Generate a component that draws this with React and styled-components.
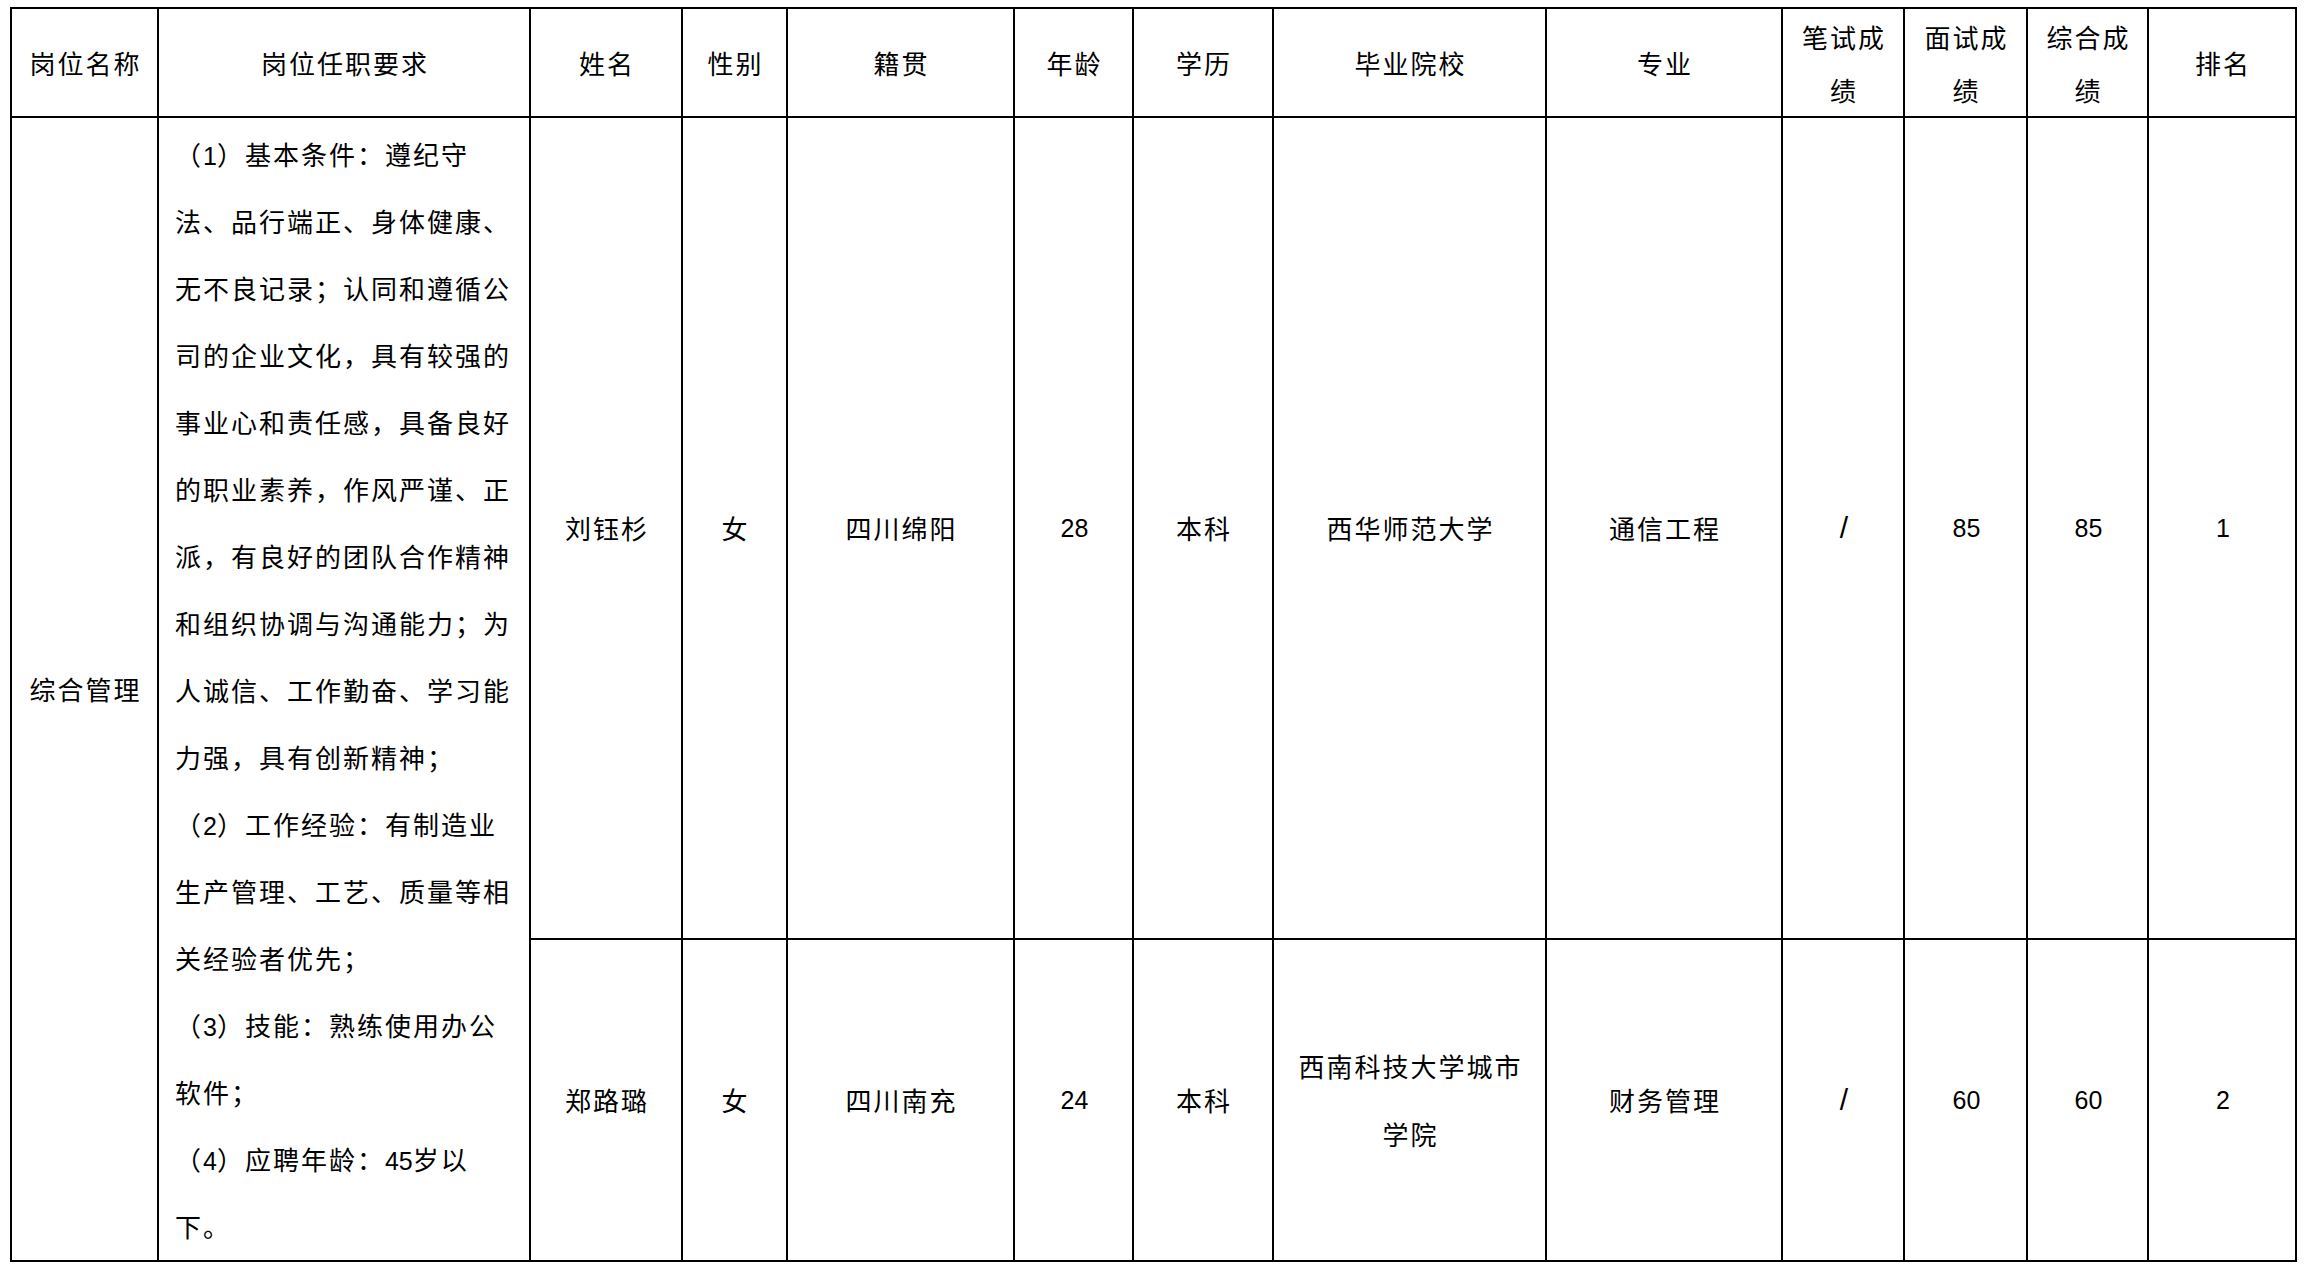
import React from 'react';
import styled, { createGlobalStyle } from 'styled-components';

const Global = createGlobalStyle`
  html, body { margin: 0; padding: 0; background: #ffffff; }
  body { font-family: "Noto Sans CJK SC", sans-serif; color: #000000; }
`;

const Page = styled.div`
  padding: 7px 11px 7px 10px;
`;

const Sheet = styled.div`
  display: grid;
  box-sizing: border-box;
  width: 2287px;
  grid-template-columns: 145px 370px 150px 103px 225px 117px 138px 271px 234px 120px 121px 119px 146px;
  grid-template-rows: 107px 820px 320px;
  gap: 2px;
  padding: 2px;
  background: #000000;
`;

const Cell = styled.div`
  background: #ffffff;
  display: flex;
  align-items: center;
  justify-content: center;
  text-align: center;
  padding-left: 2px;
  font-family: "Noto Sans CJK SC", sans-serif;
  font-size: 26px;
  letter-spacing: 2px;
  line-height: ${(p) => p.$lh || 68}px;
  grid-row: ${(p) => (p.$span ? `span ${p.$span}` : 'auto')};
  color: #000000;
`;

const HeadCell = styled(Cell)`
  line-height: 53px;
`;

const ReqCell = styled.div`
  background: #ffffff;
  grid-row: span 2;
  display: flex;
  flex-direction: column;
  justify-content: center;
  padding-left: 16px;
  font-family: "Noto Sans CJK SC", sans-serif;
  font-size: 26px;
  letter-spacing: 2px;
  color: #000000;
`;

const ReqLine = styled.div`
  height: 67px;
  line-height: 67px;
  white-space: nowrap;
`;

const Num = styled.span`
  font-family: "Liberation Sans", Arial, sans-serif;
  font-size: ${(p) => p.$size || 25}px;
  letter-spacing: 0;
`;

const headers = [
  ['岗位名称'],
  ['岗位任职要求'],
  ['姓名'],
  ['性别'],
  ['籍贯'],
  ['年龄'],
  ['学历'],
  ['毕业院校'],
  ['专业'],
  ['笔试成', '绩'],
  ['面试成', '绩'],
  ['综合成', '绩'],
  ['排名'],
];

const reqLines = [
  <>（<Num>1</Num>）基本条件：遵纪守</>,
  '法、品行端正、身体健康、',
  '无不良记录；认同和遵循公',
  '司的企业文化，具有较强的',
  '事业心和责任感，具备良好',
  '的职业素养，作风严谨、正',
  '派，有良好的团队合作精神',
  '和组织协调与沟通能力；为',
  '人诚信、工作勤奋、学习能',
  '力强，具有创新精神；',
  <>（<Num>2</Num>）工作经验：有制造业</>,
  '生产管理、工艺、质量等相',
  '关经验者优先；',
  <>（<Num>3</Num>）技能：熟练使用办公</>,
  '软件；',
  <>（<Num>4</Num>）应聘年龄：<Num>45</Num>岁以</>,
  '下。',
];

const people = [
  {
    name: '刘钰杉',
    sex: '女',
    origin: '四川绵阳',
    age: '28',
    edu: '本科',
    school: ['西华师范大学'],
    major: '通信工程',
    written: '/',
    interview: '85',
    total: '85',
    rank: '1',
  },
  {
    name: '郑路璐',
    sex: '女',
    origin: '四川南充',
    age: '24',
    edu: '本科',
    school: ['西南科技大学城市', '学院'],
    major: '财务管理',
    written: '/',
    interview: '60',
    total: '60',
    rank: '2',
  },
];

function Lines({ lines }) {
  return (
    <div>
      {lines.map((l, i) => (
        <React.Fragment key={i}>
          {i > 0 && <br />}
          {l}
        </React.Fragment>
      ))}
    </div>
  );
}

export default function App() {
  return (
    <>
      <Global />
      <Page>
        <Sheet>
          {headers.map((h, i) => (
            <HeadCell key={i}>
              <Lines lines={h} />
            </HeadCell>
          ))}

          <Cell $span={2}>综合管理</Cell>
          <ReqCell>
            {reqLines.map((l, i) => (
              <ReqLine key={i}>{l}</ReqLine>
            ))}
          </ReqCell>

          {people.map((p, i) => (
            <React.Fragment key={i}>
              <Cell>{p.name}</Cell>
              <Cell>{p.sex}</Cell>
              <Cell>{p.origin}</Cell>
              <Cell><Num>{p.age}</Num></Cell>
              <Cell>{p.edu}</Cell>
              <Cell><Lines lines={p.school} /></Cell>
              <Cell>{p.major}</Cell>
              <Cell><Num $size={30}>{p.written}</Num></Cell>
              <Cell><Num>{p.interview}</Num></Cell>
              <Cell><Num>{p.total}</Num></Cell>
              <Cell><Num>{p.rank}</Num></Cell>
            </React.Fragment>
          ))}
        </Sheet>
      </Page>
    </>
  );
}
